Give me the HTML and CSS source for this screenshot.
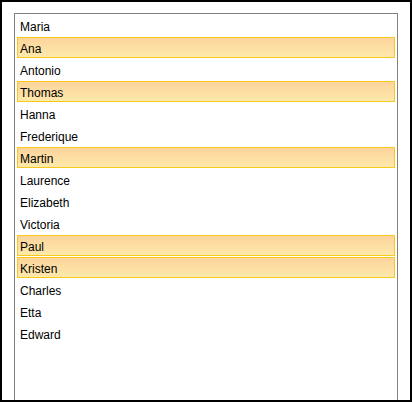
FILE: index.html
```html
<!DOCTYPE html>
<html>
<head>
<meta charset="utf-8">
<link rel="stylesheet" href="styles.css">
</head>
<body>
<div class="frame">
  <div class="listbox">
    <div class="item">Maria</div>
    <div class="item selected">Ana</div>
    <div class="item">Antonio</div>
    <div class="item selected">Thomas</div>
    <div class="item">Hanna</div>
    <div class="item">Frederique</div>
    <div class="item selected">Martin</div>
    <div class="item">Laurence</div>
    <div class="item">Elizabeth</div>
    <div class="item">Victoria</div>
    <div class="item selected">Paul</div>
    <div class="item selected">Kristen</div>
    <div class="item">Charles</div>
    <div class="item">Etta</div>
    <div class="item">Edward</div>
  </div>
</div>
</body>
</html>
```
FILE: styles.css
```css
html, body {
  margin: 0;
  padding: 0;
  background: #ffffff;
}
.frame {
  width: 412px;
  height: 402px;
  box-sizing: border-box;
  border: 2px solid #000000;
  background: #ffffff;
  padding: 11px 12px 0 12px;
  overflow: hidden;
  display: flex;
  flex-direction: column;
}
.listbox {
  flex: 1;
  border: 1px solid #828282;
  border-bottom: none;
  padding: 1px 2px 0 2px;
  display: flex;
  flex-direction: column;
  font-family: "Liberation Sans", Arial, sans-serif;
  font-size: 12px;
  color: #000000;
}
.item {
  height: 21px;
  margin-bottom: 1px;
  box-sizing: border-box;
  padding: 2px 2px 0 2px;
  border: 1px solid transparent;
  display: flex;
  align-items: center;
}
.item.selected {
  border-color: #f8c81c;
  background: linear-gradient(to bottom, #fcd49b, #fee9aa);
}
```
